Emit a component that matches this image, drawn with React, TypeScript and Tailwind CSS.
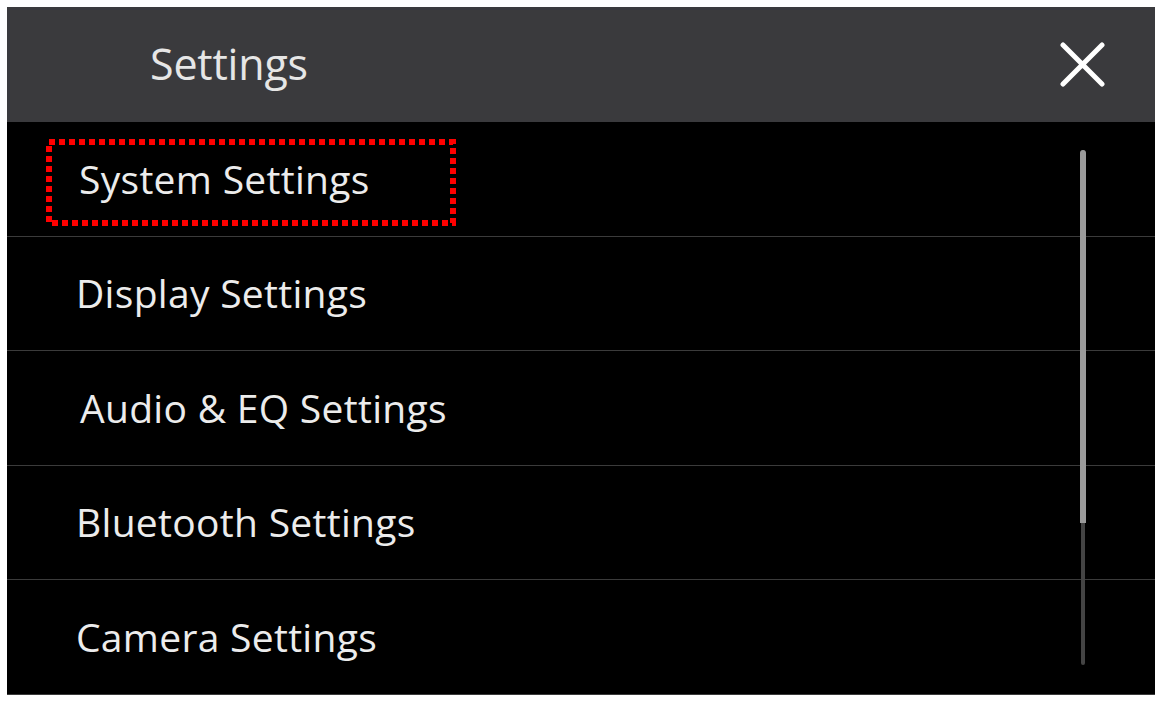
import React from 'react';

const items = [
  { label: 'System Settings', pl: 'pl-[72px]' },
  { label: 'Display Settings', pl: 'pl-[69px]' },
  { label: 'Audio & EQ Settings', pl: 'pl-[73px]' },
  { label: 'Bluetooth Settings', pl: 'pl-[69px]' },
  { label: 'Camera Settings', pl: 'pl-[69px]' },
];

const FocusRing: React.FC = () => (
  <svg className="absolute left-[39px] top-[17px]" width="410" height="87" viewBox="0 0 410 87">
    <rect
      x="3"
      y="3"
      width="404"
      height="81"
      fill="none"
      stroke="#ff0000"
      strokeWidth="6"
      strokeDasharray="6 4"
    />
  </svg>
);

const App: React.FC = () => {
  return (
    <div className="w-full h-[705px] bg-white pt-[7px] pl-[7px]" style={{ fontFamily: '"Open Sans", "Noto Sans", sans-serif' }}>
      <div className="w-[1148px] h-[688px] bg-black flex flex-col overflow-hidden">
        {/* header */}
        <div className="h-[115px] shrink-0 bg-[#3a3a3d] flex items-center justify-between pl-[143px] pr-[50px]">
          <h1 className="text-[43px] text-[#e6e6e6] tracking-[-0.2px]">Settings</h1>
          <button className="w-[45px] h-[45px]">
            <svg width="45" height="45" viewBox="0 0 45 45">
              <path d="M3 3 L42 42 M42 3 L3 42" stroke="#ffffff" strokeWidth="5" strokeLinecap="round" />
            </svg>
          </button>
        </div>

        {/* list */}
        <div className="relative flex-1 flex flex-col">
          {items.map((item, i) => (
            <div
              key={item.label}
              className={`relative h-[114.6px] shrink-0 flex items-center border-b-[1.5px] border-[#3b3b3b] ${item.pl}`}
            >
              {i === 0 && <FocusRing />}
              <span className="text-[39px] text-[#ececec] tracking-[0.3px]">{item.label}</span>
            </div>
          ))}

          {/* scrollbar */}
          <div className="absolute left-[1074px] top-[28px] w-[4px] h-[515px] bg-[#444444] rounded-full" />
          <div className="absolute left-[1073px] top-[28px] w-[6px] h-[373px] bg-[#9b9b9b] rounded-t-full" />
        </div>
      </div>
    </div>
  );
};

export default App;
